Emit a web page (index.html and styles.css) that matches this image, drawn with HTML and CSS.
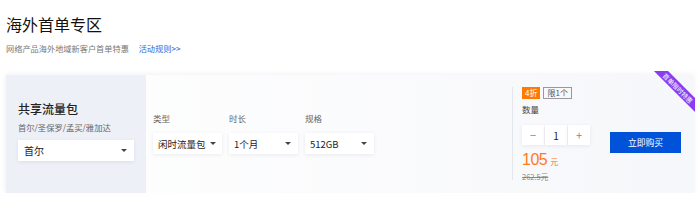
FILE: index.html
```html
<!DOCTYPE html>
<html lang="zh-CN">
<head>
  <meta charset="UTF-8">
  <title>海外首单专区</title>
  <link rel="stylesheet" href="styles.css">
</head>
<body>
  <div class="page">
    <h1>海外首单专区</h1>
    <p class="intro">网络产品海外地域新客户首单特惠 <a href="#">活动规则&gt;&gt;</a></p>

    <div class="card">
      <div class="ribbon"><span>首单限时特惠</span></div>

      <div class="side">
        <h2>共享流量包</h2>
        <p class="regions">首尔/圣保罗/孟买/雅加达</p>
        <div class="select wide">首尔 <i class="caret"></i></div>
      </div>

      <div class="options">
        <div class="field">
          <label>类型</label>
          <div class="select">闲时流量包 <i class="caret"></i></div>
        </div>
        <div class="field">
          <label>时长</label>
          <div class="select">1个月 <i class="caret"></i></div>
        </div>
        <div class="field">
          <label>规格</label>
          <div class="select">512GB <i class="caret"></i></div>
        </div>
      </div>

      <div class="buy">
        <div class="tags">
          <span class="tag off">4折</span>
          <span class="tag limit">限1个</span>
        </div>
        <div class="qty-label">数量</div>
        <div class="stepper">
          <span>&minus;</span>
          <span class="num">1</span>
          <span>+</span>
        </div>
        <div class="price">105<small>元</small></div>
        <div class="old">262.5元</div>
      </div>

      <div class="action">
        <button class="buy-btn">立即购买</button>
      </div>
    </div>
  </div>
</body>
</html>
```

FILE: styles.css
```css
* {
  margin: 0;
  padding: 0;
  box-sizing: border-box;
}

body {
  font-family: "Noto Sans CJK SC", "Noto Sans", sans-serif;
  background-color: #fff;
  color: #222;
}

.page {
  padding: 9px 7px 0 6px;
}

h1 {
  font-size: 16px;
  font-weight: 400;
  line-height: 30px;
  color: #111;
}

.intro {
  margin-top: 3px;
  font-size: 8.2px;
  line-height: 12px;
  color: #777;
}

.intro a {
  margin-left: 8px;
  color: #2c6ae0;
  text-decoration: none;
}

.card {
  position: relative;
  display: flex;
  margin-top: 21px;
  height: 118px;
  background: linear-gradient(90deg, #fff 0%, #f6f7fa 100%);
  box-shadow: 0 0 6px rgba(0, 20, 60, 0.08);
}

/* corner ribbon */
.ribbon {
  position: absolute;
  top: -4px;
  right: -2px;
  width: 46px;
  height: 46px;
  overflow: hidden;
}

.ribbon span {
  position: absolute;
  top: 12px;
  left: -4px;
  width: 66px;
  height: 10px;
  line-height: 10px;
  background: #8a3df0;
  color: #fff;
  font-size: 6.5px;
  text-align: center;
  white-space: nowrap;
  transform: rotate(45deg);
}

.side {
  width: 140px;
  flex-shrink: 0;
  padding: 26px 12px 0 12px;
  background-color: #edf0f7;
}

h2 {
  font-size: 12px;
  font-weight: 500;
  line-height: 16px;
  color: #222;
}

.regions {
  margin-top: 5px;
  font-size: 8.3px;
  line-height: 11px;
  color: #666;
}

.select {
  display: flex;
  align-items: center;
  justify-content: space-between;
  gap: 4px;
  height: 21px;
  padding: 0 7px 0 5px;
  background: #fff;
  font-size: 9.5px;
  color: #222;
  white-space: nowrap;
  box-shadow: 0 1px 4px rgba(0, 20, 60, 0.08);
}

.select.wide {
  margin-top: 7px;
  padding-left: 6px;
  font-size: 10px;
}

.caret {
  width: 0;
  height: 0;
  border-left: 3px solid transparent;
  border-right: 3px solid transparent;
  border-top: 3px solid #444;
}

.options {
  display: flex;
  gap: 7px;
  padding: 38px 0 0 7px;
  width: 366px;
  flex-shrink: 0;
}

.field {
  width: 69px;
}

.field label {
  display: block;
  font-size: 8.5px;
  line-height: 11px;
  color: #666;
  margin-bottom: 9px;
}

.buy {
  margin: 12px 0 13px 0;
  padding-left: 9px;
  border-left: 1px solid #e3e6ee;
  width: 98px;
  flex-shrink: 0;
}

.tags {
  display: flex;
  gap: 3px;
}

.tag {
  font-size: 8px;
  line-height: 10px;
  padding: 1px 3px;
}

.tag.off {
  background: #ff7a00;
  color: #fff;
}

.tag.limit {
  border: 1px solid #999;
  padding: 0 3px;
  color: #555;
}

.qty-label {
  margin-top: 4px;
  font-size: 8.5px;
  line-height: 12px;
  color: #444;
}

.stepper {
  display: flex;
  gap: 1px;
  margin-top: 10px;
  width: 68px;
  height: 20px;
}

.stepper span {
  flex: 1;
  display: flex;
  align-items: center;
  justify-content: center;
  background: #fff;
  font-size: 11px;
  color: #888;
  box-shadow: 0 1px 4px rgba(0, 20, 60, 0.08);
}

.stepper .num {
  color: #222;
  font-size: 10px;
}

.price {
  margin-top: 6px;
  font-family: "Liberation Sans", Arial, sans-serif;
  font-size: 16px;
  letter-spacing: -0.5px;
  line-height: 18px;
  color: #ff7a1a;
}

.price small {
  margin-left: 3px;
  font-family: "Noto Sans CJK SC", sans-serif;
  font-size: 8px;
}

.old {
  margin-top: 1px;
  font-size: 7.5px;
  line-height: 10px;
  color: #888;
  text-decoration: line-through;
}

.action {
  display: flex;
  align-items: flex-start;
  padding-top: 57px;
}

.buy-btn {
  width: 71px;
  height: 21px;
  border: none;
  background: #0052d9;
  color: #fff;
  font-family: "Noto Sans CJK SC", sans-serif;
  font-size: 8.8px;
  cursor: pointer;
}
```
